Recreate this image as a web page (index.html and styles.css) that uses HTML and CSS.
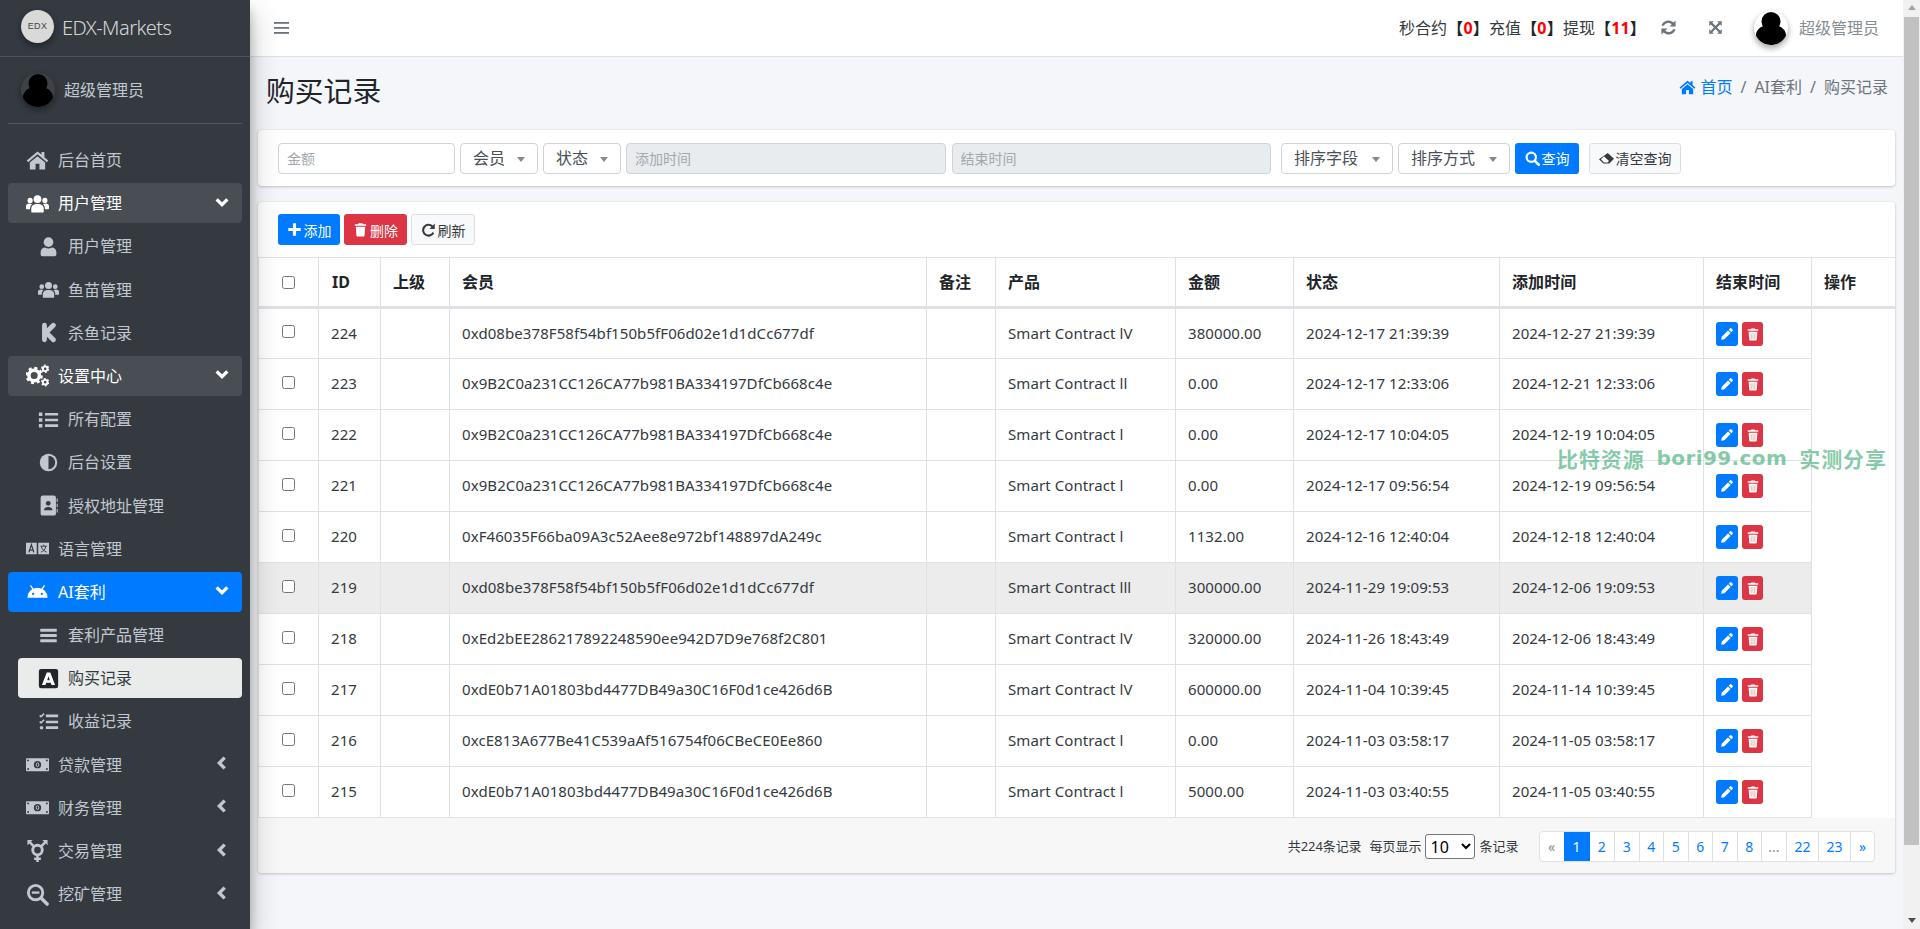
FILE: index.html
```html
<!DOCTYPE html>
<html lang="zh">
<head>
<meta charset="utf-8">
<title>购买记录</title>
<link rel="stylesheet" href="styles.css">
</head>
<body>
<svg class="sprite" aria-hidden="true">
<symbol id="i-home" viewBox="0 0 24 24"><path d="M12 2.500.8 12l1.400 1.700L12 5.500l9.800 8.200 1.400-1.700-4-3.400V3h-3v2.700z"/><path d="M12 7.500 4 14.200v7.300h6v-6h4v6h6v-7.300z"/></symbol>
<symbol id="i-users" viewBox="0 0 24 24"><circle cx="12" cy="7.500" r="4"/><path d="M5.500 20.500v-3c0-3.500 2.500-5 6.500-5s6.500 1.500 6.500 5v3q0 1-1 1h-11q-1 0-1-1z"/><circle cx="4.300" cy="8.800" r="2.700"/><circle cx="19.700" cy="8.800" r="2.700"/><path d="M0 17v-2.500C0 13 1.500 12 3.500 12c1 0 2 .3 2.700.8C5 14 4.200 15.500 4.200 18H1q-1 0-1-1z"/><path d="M24 17v-2.500c0-1.500-1.500-2.500-3.500-2.500-1 0-2 .3-2.700.8 1.200 1.200 2 2.700 2 5.200H23q1 0 1-1z"/></symbol>
<symbol id="i-user" viewBox="0 0 24 24"><circle cx="12" cy="7" r="5.500"/><path d="M3 21v-2.500C3 15 5.500 13 8 13q4 2.500 8 0c2.500 0 5 2 5 5.500V21q0 2-2 2H5q-2 0-2-2z"/></symbol>
<symbol id="i-k" viewBox="-1 -1 26 26"><path d="M7 3v18M18 3 9 12l9 9" fill="none" stroke="currentColor" stroke-width="6" stroke-linecap="round" stroke-linejoin="round"/></symbol>
<symbol id="i-cogs" viewBox="0 0 24 24"><circle cx="8.500" cy="12" r="5.500" fill="none" stroke="currentColor" stroke-width="3.600"/><circle cx="8.500" cy="12" r="7.800" fill="none" stroke="currentColor" stroke-width="2.500" stroke-dasharray="3.200 2.920"/><circle cx="20" cy="5" r="2.400" fill="none" stroke="currentColor" stroke-width="2"/><circle cx="20" cy="19" r="2.400" fill="none" stroke="currentColor" stroke-width="2"/><circle cx="20" cy="5" r="3.800" fill="none" stroke="currentColor" stroke-width="1.200" stroke-dasharray="2 2"/><circle cx="20" cy="19" r="3.800" fill="none" stroke="currentColor" stroke-width="1.200" stroke-dasharray="2 2"/></symbol>
<symbol id="i-list" viewBox="0 0 24 24"><path d="M1 4h4v4H1zM1 10.500h4v4H1zM1 17h4v4H1zM8 4.500h15v3H8zM8 11h15v3H8zM8 17.500h15v3H8z"/></symbol>
<symbol id="i-adjust" viewBox="0 0 24 24"><circle cx="12" cy="12" r="11"/><path d="M12 3.500a8.500 8.500 0 0 1 0 17z" fill="#343a40"/></symbol>
<symbol id="i-book" viewBox="0 0 24 24"><rect x="3" y="0.500" width="17.500" height="23" rx="2.500"/><path d="M21.300 4h1.200v4h-1.200zM21.300 10h1.200v4h-1.200zM21.300 16h1.200v4h-1.200z"/><circle cx="11.700" cy="9.500" r="2.700" fill="#343a40"/><path d="M6.800 17.500c0-2.500 2-3.800 4.900-3.800s4.900 1.300 4.900 3.800z" fill="#343a40"/></symbol>
<symbol id="i-lang" viewBox="0 0 24 14"><rect x="0" y="1" width="11.200" height="12"/><rect x="12.800" y="1" width="11.200" height="12"/><path d="M3 11l2.600-8L8.200 11M4 8.800h3.200" fill="none" stroke="#343a40" stroke-width="1.300"/><path d="M15 4.600h6.800M18.400 3v1.600M16 5c.7 2.800 2.700 4.800 5.500 5.800M20.700 5c-.6 2.800-2.400 4.800-5.200 5.800" fill="none" stroke="#343a40" stroke-width="1"/></symbol>
<symbol id="i-android" viewBox="0 0 24 14"><path d="M1.500 13.500a10.500 10.500 0 0 1 21 0z"/><path d="M5 1l2.500 4M19 1l-2.500 4" stroke="currentColor" stroke-width="1.400" stroke-linecap="round"/><circle cx="7.500" cy="9.500" r="1.200" fill="#007bff"/><circle cx="16.500" cy="9.500" r="1.200" fill="#007bff"/></symbol>
<symbol id="i-bars" viewBox="-2 -2 28 28"><rect x="1" y="3" width="22" height="4" rx=".8"/><rect x="1" y="10" width="22" height="4" rx=".8"/><rect x="1" y="17" width="22" height="4" rx=".8"/></symbol>
<symbol id="i-bars-thin" viewBox="0 0 16 16"><rect y="2" width="15" height="1.800"/><rect y="7" width="15" height="1.800"/><rect y="12" width="15" height="1.800"/></symbol>
<symbol id="i-abox" viewBox="0 0 24 24"><rect x="1" y="1" width="22" height="22" rx="2.500" fill="#212529"/><path d="M10 5h4l5.500 14.500h-4l-.9-2.700H9.400l-.9 2.700h-4zM12 9.500l-1.500 4.500h3z" fill="#fff" fill-rule="evenodd"/></symbol>
<symbol id="i-tasks" viewBox="0 0 24 24"><path d="M2 5l1.500 1.500L7 3M2 12l1.500 1.500L7 10" fill="none" stroke="currentColor" stroke-width="1.800"/><circle cx="4" cy="19" r="2"/><path d="M9 4h14v3H9zM9 11h14v3H9zM9 17.500h14v3H9z"/></symbol>
<symbol id="i-money" viewBox="0 0 24 14"><rect y="0.500" width="24" height="13.500" rx=".8"/><circle cx="12" cy="7.200" r="3.800" fill="#343a40"/><ellipse cx="12" cy="7.200" rx="1.300" ry="2" fill="none" stroke="#c2c7d0" stroke-width="1"/><circle cx="2.200" cy="2.700" r="1" fill="#343a40"/><circle cx="21.800" cy="2.700" r="1" fill="#343a40"/><circle cx="2.200" cy="11.700" r="1" fill="#343a40"/><circle cx="21.800" cy="11.700" r="1" fill="#343a40"/></symbol>
<symbol id="i-trans" viewBox="0 0 24 24"><circle cx="12" cy="10.500" r="5" fill="none" stroke="currentColor" stroke-width="3"/><path d="M12 15v8M8.500 19.500h7M8.500 7 4 2.500M15.500 7 20 2.500" fill="none" stroke="currentColor" stroke-width="2.600"/><path d="M1.500 0H7L1.500 5.500zM22.500 0H17l5.500 5.500z"/></symbol>
<symbol id="i-search-minus" viewBox="0 0 24 24"><circle cx="10" cy="10" r="7.500" fill="none" stroke="currentColor" stroke-width="3"/><path d="M6 10h8" stroke="currentColor" stroke-width="2.400"/><path d="M16 16l6 6" stroke="currentColor" stroke-width="3.600" stroke-linecap="round"/></symbol>
<symbol id="i-down" viewBox="0 0 24 24"><path d="M4 8l8 8 8-8" fill="none" stroke="currentColor" stroke-width="5"/></symbol>
<symbol id="i-left" viewBox="0 0 24 24"><path d="M16 4l-8 8 8 8" fill="none" stroke="currentColor" stroke-width="5"/></symbol>
<symbol id="i-refresh" viewBox="0 0 24 24"><path d="M22 2v8.500h-8.500l3-3A7 7 0 0 0 5.300 9.500H2A10.300 10.300 0 0 1 19 5z"/><path d="M2 22v-8.500h8.500l-3 3a7 7 0 0 0 11.200-2H22A10.300 10.300 0 0 1 5 19z"/></symbol>
<symbol id="i-expand" viewBox="0 0 24 24"><path d="M2 2h7.500L7 4.500l5 5 5-5L14.500 2H22v7.500L19.500 7l-5 5 5 5 2.500-2.500V22h-7.500l2.500-2.500-5-5-5 5L9.500 22H2v-7.500L4.500 17l5-5-5-5L2 9.500z"/></symbol>
<symbol id="i-pencil" viewBox="0 0 24 24"><path d="M17 2.500a2 2 0 0 1 2.800 0l1.700 1.700a2 2 0 0 1 0 2.800l-2 2L15 4.500zM13.700 5.800l4.500 4.500L7.500 21 2 22l1-5.500z"/></symbol>
<symbol id="i-trash" viewBox="0 0 24 24"><path d="M9 2h6l1 1.500h5V6H3V3.500h5z"/><path d="M4.500 7.500h15l-1 14q-.1 1.500-1.500 1.500H7q-1.400 0-1.500-1.500z"/></symbol>
<symbol id="i-trash-s" viewBox="0 0 24 24"><path d="M9 2.500h6l1 1.500h5v2.500H3V4h5z"/><path d="M4.500 8h15l-1 13.500q-.1 1.500-1.500 1.500H7q-1.400 0-1.500-1.500z"/><path d="M9 10.500v10M12 10.500v10M15 10.500v10" stroke="#f39a8a" stroke-width="1.200"/></symbol>
<symbol id="i-plus" viewBox="0 0 24 24"><path d="M9.500 2h5v7.500H22v5h-7.500V22h-5v-7.500H2v-5h7.500z"/></symbol>
<symbol id="i-search" viewBox="0 0 24 24"><circle cx="10" cy="10" r="7.500" fill="none" stroke="currentColor" stroke-width="3.600"/><path d="M16 16l6 6" stroke="currentColor" stroke-width="4" stroke-linecap="round"/></symbol>
<symbol id="i-eraser" viewBox="0 0 24 24"><path d="M14 3 24 12.500 16.500 20H7L0 13z"/><path d="M3 13 8 8.500 16 16 13.800 18.200H8z" fill="#f8f9fa"/></symbol>
<symbol id="i-redo" viewBox="0 0 24 24"><path d="M22 2.500v8.500h-8.500l3.200-3.200A7 7 0 1 0 18.500 16l2.700 1.800A10.300 10.300 0 1 1 19 5.500z"/></symbol>
<symbol id="i-avatar" viewBox="0 0 34 34"><circle cx="17" cy="10.500" r="9.500" fill="#000"/><path d="M2 24c0-4 3.500-8 8.500-9.500 3.500 3.500 9.500 3.500 13 0C28.500 16 32 20 32 24c0 6-6.500 10-15 10S2 30 2 24z" fill="#000"/></symbol>
</svg>

<aside class="sidebar">
  <div class="brand">
    <span class="brand-logo">EDX</span>
    <span class="brand-name">EDX-Markets</span>
  </div>
  <div class="panel">
    <span class="avatar avatar-dark"><svg><use href="#i-avatar"/></svg></span>
    <span class="panel-name">超级管理员</span>
  </div>
  <nav class="nav">
    <a class="link"><svg class="ic"><use href="#i-home"/></svg><span>后台首页</span></a>
    <a class="link open"><svg class="ic"><use href="#i-users"/></svg><span>用户管理</span><svg class="chev"><use href="#i-down"/></svg></a>
    <div class="sub">
      <a class="link"><svg class="ic"><use href="#i-user"/></svg><span>用户管理</span></a>
      <a class="link"><svg class="ic"><use href="#i-users"/></svg><span>鱼苗管理</span></a>
      <a class="link"><svg class="ic"><use href="#i-k"/></svg><span>杀鱼记录</span></a>
    </div>
    <a class="link open"><svg class="ic"><use href="#i-cogs"/></svg><span>设置中心</span><svg class="chev"><use href="#i-down"/></svg></a>
    <div class="sub">
      <a class="link"><svg class="ic"><use href="#i-list"/></svg><span>所有配置</span></a>
      <a class="link"><svg class="ic ic-s"><use href="#i-adjust"/></svg><span>后台设置</span></a>
      <a class="link"><svg class="ic"><use href="#i-book"/></svg><span>授权地址管理</span></a>
    </div>
    <a class="link"><svg class="ic"><use href="#i-lang"/></svg><span>语言管理</span></a>
    <a class="link current"><svg class="ic"><use href="#i-android"/></svg><span>AI套利</span><svg class="chev"><use href="#i-down"/></svg></a>
    <div class="sub">
      <a class="link"><svg class="ic"><use href="#i-bars"/></svg><span>套利产品管理</span></a>
      <a class="link selected"><svg class="ic"><use href="#i-abox"/></svg><span>购买记录</span></a>
      <a class="link"><svg class="ic"><use href="#i-tasks"/></svg><span>收益记录</span></a>
    </div>
    <a class="link"><svg class="ic"><use href="#i-money"/></svg><span>贷款管理</span><svg class="chev"><use href="#i-left"/></svg></a>
    <a class="link"><svg class="ic"><use href="#i-money"/></svg><span>财务管理</span><svg class="chev"><use href="#i-left"/></svg></a>
    <a class="link"><svg class="ic"><use href="#i-trans"/></svg><span>交易管理</span><svg class="chev"><use href="#i-left"/></svg></a>
    <a class="link"><svg class="ic"><use href="#i-search-minus"/></svg><span>挖矿管理</span><svg class="chev"><use href="#i-left"/></svg></a>
  </nav>
</aside>

<div class="main">
  <header class="topbar">
    <svg class="hamburger"><use href="#i-bars-thin"/></svg>
    <div class="top-right">
      <div class="counts">秒合约<span class="br">【</span><b>0</b><span class="br">】</span>充值<span class="br">【</span><b>0</b><span class="br">】</span>提现<span class="br">【</span><b>11</b><span class="br">】</span></div>
      <svg class="top-ic top-refresh"><use href="#i-refresh"/></svg>
      <svg class="top-ic top-expand"><use href="#i-expand"/></svg>
      <span class="avatar avatar-light"><svg><use href="#i-avatar"/></svg></span>
      <span class="top-name">超级管理员</span>
    </div>
  </header>

  <div class="heading">
    <h1>购买记录</h1>
    <div class="crumbs">
      <svg class="crumb-home"><use href="#i-home"/></svg><a class="crumb-link">首页</a>
      <span class="sep">/</span><span>AI套利</span>
      <span class="sep">/</span><span>购买记录</span>
    </div>
  </div>

  <section class="card filter">
    <input class="field field-amount" placeholder="金额">
    <div class="sel">会员<i class="caret"></i></div>
    <div class="sel">状态<i class="caret"></i></div>
    <input class="field field-time" placeholder="添加时间" disabled>
    <input class="field field-time" placeholder="结束时间" disabled>
    <div class="sel sel-wide sel-first">排序字段<i class="caret"></i></div>
    <div class="sel sel-wide">排序方式<i class="caret"></i></div>
    <button class="btn btn-blue btn-query"><svg><use href="#i-search"/></svg>查询</button>
    <button class="btn btn-light btn-clear"><svg><use href="#i-eraser"/></svg>清空查询</button>
  </section>

  <section class="card list">
    <div class="toolbar">
      <button class="btn btn-blue"><svg><use href="#i-plus"/></svg>添加</button>
      <button class="btn btn-red"><svg><use href="#i-trash"/></svg>删除</button>
      <button class="btn btn-light"><svg><use href="#i-redo"/></svg>刷新</button>
    </div>
    <table class="grid">
      <thead>
        <tr><th class="c-check"><input type="checkbox"></th><th class="c-id">ID</th><th class="c-parent">上级</th><th class="c-member">会员</th><th class="c-note">备注</th><th class="c-prod">产品</th><th class="c-amount">金额</th><th class="c-state">状态</th><th class="c-add">添加时间</th><th class="c-end">结束时间</th><th class="c-op">操作</th></tr>
      </thead>
      <tbody>
        <tr><td class="c-check"><input type="checkbox"></td><td>224</td><td></td><td>0xd08be378F58f54bf150b5fF06d02e1d1dCc677df</td><td></td><td>Smart Contract lV</td><td>380000.00</td><td>2024-12-17 21:39:39</td><td>2024-12-27 21:39:39</td><td class="acts"><button class="mini mini-blue"><svg><use href="#i-pencil"/></svg></button><button class="mini mini-red"><svg><use href="#i-trash-s"/></svg></button></td></tr>
        <tr><td class="c-check"><input type="checkbox"></td><td>223</td><td></td><td>0x9B2C0a231CC126CA77b981BA334197DfCb668c4e</td><td></td><td>Smart Contract ll</td><td>0.00</td><td>2024-12-17 12:33:06</td><td>2024-12-21 12:33:06</td><td class="acts"><button class="mini mini-blue"><svg><use href="#i-pencil"/></svg></button><button class="mini mini-red"><svg><use href="#i-trash-s"/></svg></button></td></tr>
        <tr><td class="c-check"><input type="checkbox"></td><td>222</td><td></td><td>0x9B2C0a231CC126CA77b981BA334197DfCb668c4e</td><td></td><td>Smart Contract l</td><td>0.00</td><td>2024-12-17 10:04:05</td><td>2024-12-19 10:04:05</td><td class="acts"><button class="mini mini-blue"><svg><use href="#i-pencil"/></svg></button><button class="mini mini-red"><svg><use href="#i-trash-s"/></svg></button></td></tr>
        <tr><td class="c-check"><input type="checkbox"></td><td>221</td><td></td><td>0x9B2C0a231CC126CA77b981BA334197DfCb668c4e</td><td></td><td>Smart Contract l</td><td>0.00</td><td>2024-12-17 09:56:54</td><td>2024-12-19 09:56:54</td><td class="acts"><button class="mini mini-blue"><svg><use href="#i-pencil"/></svg></button><button class="mini mini-red"><svg><use href="#i-trash-s"/></svg></button></td></tr>
        <tr><td class="c-check"><input type="checkbox"></td><td>220</td><td></td><td>0xF46035F66ba09A3c52Aee8e972bf148897dA249c</td><td></td><td>Smart Contract l</td><td>1132.00</td><td>2024-12-16 12:40:04</td><td>2024-12-18 12:40:04</td><td class="acts"><button class="mini mini-blue"><svg><use href="#i-pencil"/></svg></button><button class="mini mini-red"><svg><use href="#i-trash-s"/></svg></button></td></tr>
        <tr class="hover"><td class="c-check"><input type="checkbox"></td><td>219</td><td></td><td>0xd08be378F58f54bf150b5fF06d02e1d1dCc677df</td><td></td><td>Smart Contract lll</td><td>300000.00</td><td>2024-11-29 19:09:53</td><td>2024-12-06 19:09:53</td><td class="acts"><button class="mini mini-blue"><svg><use href="#i-pencil"/></svg></button><button class="mini mini-red"><svg><use href="#i-trash-s"/></svg></button></td></tr>
        <tr><td class="c-check"><input type="checkbox"></td><td>218</td><td></td><td>0xEd2bEE286217892248590ee942D7D9e768f2C801</td><td></td><td>Smart Contract lV</td><td>320000.00</td><td>2024-11-26 18:43:49</td><td>2024-12-06 18:43:49</td><td class="acts"><button class="mini mini-blue"><svg><use href="#i-pencil"/></svg></button><button class="mini mini-red"><svg><use href="#i-trash-s"/></svg></button></td></tr>
        <tr><td class="c-check"><input type="checkbox"></td><td>217</td><td></td><td>0xdE0b71A01803bd4477DB49a30C16F0d1ce426d6B</td><td></td><td>Smart Contract lV</td><td>600000.00</td><td>2024-11-04 10:39:45</td><td>2024-11-14 10:39:45</td><td class="acts"><button class="mini mini-blue"><svg><use href="#i-pencil"/></svg></button><button class="mini mini-red"><svg><use href="#i-trash-s"/></svg></button></td></tr>
        <tr><td class="c-check"><input type="checkbox"></td><td>216</td><td></td><td>0xcE813A677Be41C539aAf516754f06CBeCE0Ee860</td><td></td><td>Smart Contract l</td><td>0.00</td><td>2024-11-03 03:58:17</td><td>2024-11-05 03:58:17</td><td class="acts"><button class="mini mini-blue"><svg><use href="#i-pencil"/></svg></button><button class="mini mini-red"><svg><use href="#i-trash-s"/></svg></button></td></tr>
        <tr><td class="c-check"><input type="checkbox"></td><td>215</td><td></td><td>0xdE0b71A01803bd4477DB49a30C16F0d1ce426d6B</td><td></td><td>Smart Contract l</td><td>5000.00</td><td>2024-11-03 03:40:55</td><td>2024-11-05 03:40:55</td><td class="acts"><button class="mini mini-blue"><svg><use href="#i-pencil"/></svg></button><button class="mini mini-red"><svg><use href="#i-trash-s"/></svg></button></td></tr>
      </tbody>
    </table>
    <footer class="foot">
      <span class="total">共224条记录</span>
      <span class="per">每页显示</span>
      <select class="size"><option>10</option></select>
      <span class="unit">条记录</span>
      <div class="pager">
        <a class="pg pg-edge muted">«</a><a class="pg pg-on">1</a><a class="pg">2</a><a class="pg">3</a><a class="pg">4</a><a class="pg">5</a><a class="pg">6</a><a class="pg">7</a><a class="pg">8</a><a class="pg pg-more muted">...</a><a class="pg pg-wide">22</a><a class="pg pg-wide">23</a><a class="pg pg-edge">»</a>
      </div>
    </footer>
  </section>
  <div class="watermark"><span>比特资源</span><span class="wm-latin">bori99.com</span><span>实测分享</span></div>
</div>

<div class="scrollbar">
  <span class="arrow arrow-up"></span>
  <div class="thumb"></div>
  <span class="arrow arrow-down"></span>
</div>
</body>
</html>
```
FILE: styles.css
```css
* { box-sizing: border-box; }
html, body { height: 100%; }
body {
  margin: 0;
  height: 929px;
  overflow: hidden;
  display: flex;
  background: #f4f6f9;
  color: #212529;
  font: 400 16px/24px "Noto Sans", "Noto Sans CJK SC", sans-serif;
}
.sprite { width: 0; height: 0; position: absolute; }
svg { fill: currentColor; display: block; }

/* sidebar */
.sidebar {
  width: 250px;
  flex: none;
  height: 929px;
  overflow: hidden;
  background: #343a40;
  color: #c2c7d0;
  position: relative;
  z-index: 5;
  box-shadow: 0 14px 28px rgba(0,0,0,.25), 0 10px 10px rgba(0,0,0,.22);
}
.brand {
  height: 57px;
  display: flex;
  align-items: center;
  padding: 0 0 3px 21px;
  border-bottom: 1px solid #4b545c;
}
.brand-logo {
  width: 33px;
  height: 33px;
  border-radius: 50%;
  background: #d9d9d9;
  color: #444;
  font: 400 9px/33px "Liberation Sans", sans-serif;
  letter-spacing: .3px;
  text-align: center;
  box-shadow: 0 3px 6px rgba(0,0,0,.16), 0 3px 6px rgba(0,0,0,.23);
  flex: none;
}
.brand-name {
  margin: 3px 0 0 8px;
  font-size: 20px;
  font-weight: 300;
  color: rgba(255,255,255,.8);
  letter-spacing: -.55px;
}
.panel {
  height: 67px;
  margin: 0 8px;
  padding-left: 13px;
  display: flex;
  align-items: center;
  border-bottom: 1px solid #4f5962;
}
.avatar {
  width: 34px;
  height: 34px;
  border-radius: 50%;
  overflow: hidden;
  flex: none;
  box-shadow: 0 3px 6px rgba(0,0,0,.16), 0 3px 6px rgba(0,0,0,.23);
}
.avatar svg { width: 34px; height: 34px; }
.avatar-dark { background: #3c4248; }
.avatar-light { background: #fff; }
.panel-name { margin-left: 9px; color: #c2c7d0; }
.nav { padding: 16px 8px 0; }
.sub { padding-left: 10px; }
.link {
  display: flex;
  align-items: center;
  height: 40px;
  margin-bottom: 3.2px;
  padding-left: 18px;
  border-radius: 4px;
  color: #c2c7d0;
}
.sub .link { padding-left: 20px; }
.ic { width: 23px; height: 23px; flex: none; margin-right: 9px; }
.sub .ic { width: 21px; height: 21px; margin-right: 9px; }
.sub .ic-s { height: 19px; }
.chev { width: 16px; height: 16px; margin-left: auto; margin-right: 12px; margin-top: -3px; }
.open { background: rgba(255,255,255,.1); color: #fff; }
.current { background: #007bff; color: #fff; }
.link.selected { background: #e9ecea; color: #343a40; }

/* main */
.main { flex: 1; min-width: 0; height: 929px; position: relative; overflow: hidden; }
.topbar {
  height: 57px;
  background: #fff;
  border-bottom: 1px solid #dee2e6;
  display: flex;
  align-items: center;
  padding: 0 24px 1px 24px;
}
.hamburger { width: 16px; height: 16px; color: #6c757d; }
.top-right { margin-left: auto; display: flex; align-items: center; }
.counts { color: #343a40; }
.counts b { color: #f00; font-weight: 700; }
.br { display: inline-block; width: 16.4px; text-align: center; font-weight: 700; color: #212529; }
.top-ic { width: 17px; height: 17px; color: #6c757d; flex: none; }
.top-refresh { margin-left: 14px; }
.top-expand { margin-left: 31px; width: 15px; height: 15px; }
.avatar-light { margin-left: 31px; }
.top-name { margin-left: 11px; color: #868e96; font-size: 16px; width: 80px; white-space: nowrap; }

.heading {
  height: 73px;
  display: flex;
  align-items: center;
  padding: 0 15px 0 16px;
  justify-content: space-between;
}
.heading h1 { margin: -6px 0 0 0; font-size: 28.8px; font-weight: 400; line-height: 36px; color: #212529; }
.crumbs { display: flex; align-items: center; color: #6c757d; margin: -13px 0 0; }
.crumb-home { width: 17px; height: 17px; color: #007bff; margin-right: 4px; }
.crumb-link { color: #007bff; }
.sep { margin: 0 8px; }

.card {
  margin: 0 8px 16px;
  background: #fff;
  border-radius: 4px;
  box-shadow: 0 0 1px rgba(0,0,0,.125), 0 1px 3px rgba(0,0,0,.2);
}
.filter {
  height: 56px;
  display: flex;
  align-items: center;
  gap: 5px;
  padding: 0 20px;
}
.field {
  height: 31px;
  border: 1px solid #ced4da;
  border-radius: 4px;
  padding: 0 8px;
  font: 14px "Noto Sans", "Noto Sans CJK SC", sans-serif;
  outline: 0;
  background: #fff;
  flex: none;
}
.field::placeholder { color: #a3a8ae; opacity: 1; }
.field-amount { width: 177px; }
.field-time { width: 319.5px; background: #e9ecef; }
.field-time + .field-time { margin-left: 1px; }
.sel {
  width: 78px;
  height: 31px;
  border: 1px solid #ced4da;
  border-radius: 4px;
  display: flex;
  align-items: center;
  padding: 0 12px;
  color: #495057;
  background: #fff;
  flex: none;
  white-space: nowrap;
}
.sel-wide { width: 112px; }
.sel-first { margin-left: 5px; }
.caret {
  margin-left: auto;
  margin-top: 3px;
  border-left: 4px solid transparent;
  border-right: 4px solid transparent;
  border-top: 5px solid #888;
}
.btn {
  height: 31px;
  border: 1px solid transparent;
  border-radius: 3.2px;
  display: inline-flex;
  align-items: center;
  justify-content: center;
  padding: 0;
  font: 14px "Noto Sans", "Noto Sans CJK SC", sans-serif;
  color: #fff;
  flex: none;
}
.btn svg { width: 15px; height: 15px; margin-right: 2px; }
.btn-blue { background: #007bff; width: 62px; }
.btn-red { background: #dc3545; width: 63px; }
.btn-light { background: #f8f9fa; border-color: #dcdfe2; color: #343a40; width: 64px; }
.btn-query { width: 64px; }
.btn-clear { width: 92px; margin-left: 5px; }

.list { height: 671px; position: relative; overflow: hidden; margin-bottom: 0; }
.toolbar { height: 55px; padding: 12px 20px 0; display: flex; gap: 4px; }
.grid {
  width: 1637px;
  table-layout: fixed;
  border-collapse: collapse;
  font-size: 15px;
  letter-spacing: .08px;
}
.grid th {
  height: 50px;
  padding: 0 12px 1px;
  text-align: left;
  font-size: 16px;
  font-weight: 700;
  border: 1px solid #dee2e6;
  border-bottom-width: 3px;
  white-space: nowrap;
}
.grid th.c-id { padding-left: 13px; }
.grid td {
  height: 51px;
  padding: 0 12px 2px;
  border: 1px solid #dee2e6;
  color: #343a40;
  white-space: nowrap;
  overflow: hidden;
}
.grid input { margin: 0; display: block; margin-inline: auto; width: 13px; height: 13px; }
.grid th.c-check { padding: 0; }
.grid td.c-check { padding: 0 0 4px; }
.c-check { width: 60px; }
.c-id { width: 62px; }
.c-parent { width: 69px; }
.c-member { width: 477px; }
.c-note { width: 69px; }
.c-prod { width: 180px; }
.c-amount { width: 118px; }
.c-state { width: 206px; }
.c-add { width: 204px; }
.c-end { width: 108px; }
.c-op { width: 84px; }
.hover td { background: #ececec; }
.acts { font-size: 0; }
.grid td.acts { padding: 7px 0 0 12px; }
.mini {
  width: 22px;
  height: 24px;
  border: 0;
  border-radius: 3px;
  padding: 0;
  display: inline-flex;
  align-items: center;
  justify-content: center;
  color: #fff;
}
.mini + .mini { margin-left: 4px; width: 21px; }
.mini svg { width: 14px; height: 14px; }
.mini-blue { background: #007bff; }
.mini-red { background: #dc3545; }

.foot {
  height: 56px;
  background: #f7f7f7;
  display: flex;
  align-items: center;
  padding: 0 20px 0 0;
  font-size: 13px;
  color: #343a40;
  justify-content: flex-end;
  white-space: nowrap;
}
.total { letter-spacing: -.1px; }
.per { margin-left: 8px; }
.size {
  margin: 0 4px;
  width: 50px;
  height: 25px;
  font: 16px "Noto Sans", sans-serif;
  background: #fff;
  color: #000;
  border: 1px solid #767676;
  border-radius: 3px;
}
.pager {
  margin-left: 20px;
  display: flex;
  height: 31px;
  background: #fff;
  border: 1px solid #dee2e6;
  border-radius: 4px;
  font-size: 14px;
  line-height: 29px;
}
.pg { width: 24.5px; text-align: center; color: #007bff; border-left: 1px solid #dee2e6; }
.pg:first-child { border-left: 0; }
.pg-on { background: #007bff; color: #fff; width: 26px; border-left: 0; }
.pg-on + .pg { border-left: 0; }
.pg-more { width: 25px; }
.pg-wide { width: 32px; }
.pg-edge { width: 24px; }
.muted { color: #868e96; }

.watermark {
  position: absolute;
  left: 1307px;
  top: 445px;
  display: flex;
  gap: 12px;
  font: 700 21px/26px "Noto Sans CJK SC", sans-serif;
  color: rgba(80,180,130,.7);
  letter-spacing: .9px;
  white-space: nowrap;
}
.wm-latin { font-family: "DejaVu Sans", sans-serif; font-size: 20px; letter-spacing: .4px; }

/* window scrollbar */
.scrollbar {
  width: 17px;
  flex: none;
  height: 929px;
  background: #f1f1f1;
  position: relative;
  display: flex;
  flex-direction: column;
  align-items: center;
}
.thumb { width: 15px; height: 828px; background: #c1c1c1; margin-top: 7px; }
.arrow { border-left: 4.5px solid transparent; border-right: 4.5px solid transparent; flex: none; }
.arrow-up { border-bottom: 5px solid #a3a3a3; margin-top: 5px; }
.arrow-down { border-top: 5px solid #505050; margin-top: auto; margin-bottom: 6px; }
```
